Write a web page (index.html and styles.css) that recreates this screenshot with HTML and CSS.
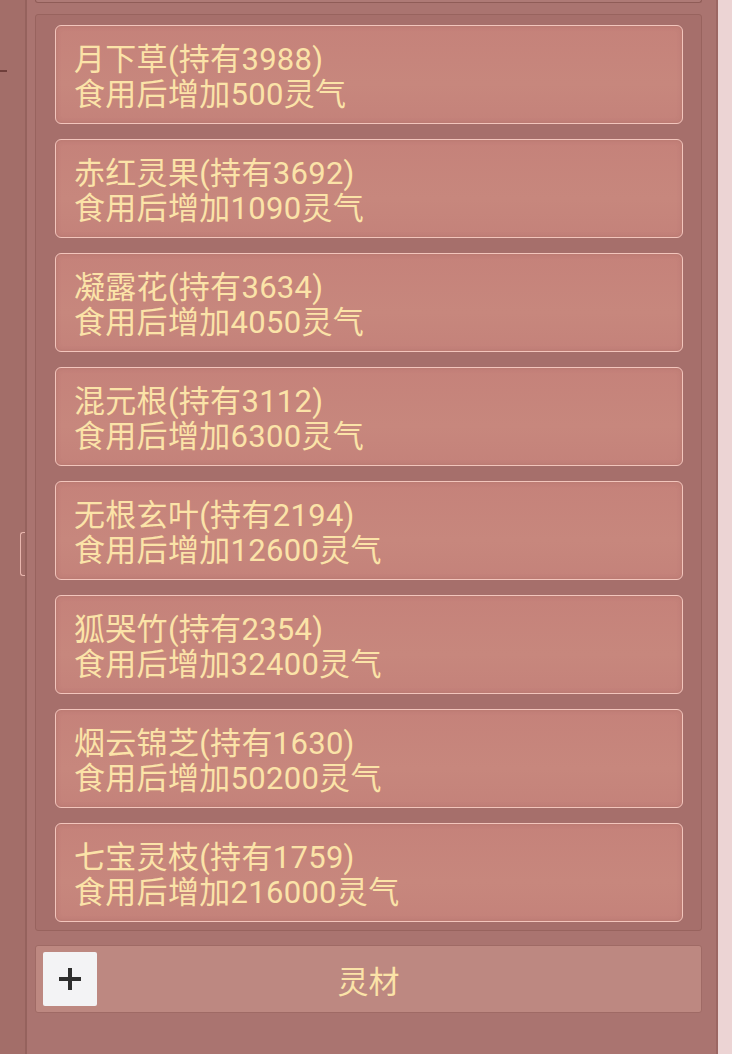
FILE: index.html
```html
<!DOCTYPE html>
<html>
	<head>
		<meta charset="utf-8">
		<title>灵材</title>
		<link rel="stylesheet" href="styles.css">
	</head>
	<body>
		<div class="side">
			<span class="dash"></span>
			<span class="bracket"></span>
		</div>
		<div class="panel">
			<div class="top-bar"></div>
			<ul class="list">
				<li class="item"><p>月下草(持有3988)</p><p>食用后增加500灵气</p></li>
				<li class="item"><p>赤红灵果(持有3692)</p><p>食用后增加1090灵气</p></li>
				<li class="item"><p>凝露花(持有3634)</p><p>食用后增加4050灵气</p></li>
				<li class="item"><p>混元根(持有3112)</p><p>食用后增加6300灵气</p></li>
				<li class="item"><p>无根玄叶(持有2194)</p><p>食用后增加12600灵气</p></li>
				<li class="item"><p>狐哭竹(持有2354)</p><p>食用后增加32400灵气</p></li>
				<li class="item"><p>烟云锦芝(持有1630)</p><p>食用后增加50200灵气</p></li>
				<li class="item"><p>七宝灵枝(持有1759)</p><p>食用后增加216000灵气</p></li>
			</ul>
			<div class="tab">
				<button class="add">
					<svg width="26" height="26" viewBox="0 0 26 26">
						<path d="M13 2 V24 M2 13 H24" stroke="#2e2e2e" stroke-width="4"/>
					</svg>
				</button>
				<span class="label">灵材</span>
			</div>
		</div>
		<div class="bg"></div>
	</body>
</html>
```

FILE: styles.css
```css
* {
	margin: 0;
	padding: 0;
	box-sizing: border-box;
}

ul {
	list-style: none;
}

body {
	display: flex;
	height: 1054px;
	overflow: hidden;
	background-color: #ead2d1;
	font-family: Roboto, "Noto Sans CJK SC", sans-serif;
}

.side {
	width: 27px;
	flex-shrink: 0;
	display: flex;
	flex-direction: column;
	align-items: flex-start;
	background-color: #a36e69;
	border-right: 2px solid #95625d;
}

.side .dash {
	width: 7px;
	height: 2px;
	margin-top: 70px;
	background-color: #6f3f3b;
}

.side .bracket {
	width: 5px;
	height: 44px;
	margin-top: 460px;
	margin-left: 20px;
	border: 1px solid #e8b6ae;
	border-right: none;
	border-radius: 3px 0 0 3px;
}

.panel {
	width: 691px;
	flex-shrink: 0;
	padding: 0 14px 0 8px;
	background-color: #aa7470;
	border-right: 2px solid #9c6763;
}

.top-bar {
	height: 3px;
	background-color: #ae7a76;
	border: 1px solid #8f5c57;
	border-top: none;
	border-radius: 0 0 3px 3px;
}

.list {
	margin-top: 11px;
	padding: 10px 18px 8px 19px;
	display: flex;
	flex-direction: column;
	gap: 15px;
	background-color: #a66f6b;
	border: 1px solid #98635e;
	border-radius: 3px;
}

.list .item {
	height: 99px;
	padding: 16px 18px 0;
	color: #fbe3a8;
	font-size: 31px;
	line-height: 35px;
	letter-spacing: 0.3px;
	white-space: nowrap;
	background: linear-gradient(180deg, #c5827a 0%, #c7877d 60%, #c4827a 100%);
	border: 1px solid #f2c5bc;
	border-radius: 6px;
	box-shadow: inset 0 0 5px rgba(150, 90, 85, 0.3);
}

.tab {
	margin-top: 14px;
	height: 68px;
	padding: 6px 7px;
	display: grid;
	grid-template-columns: 54px 1fr 54px;
	align-items: center;
	background-color: #bd8881;
	border: 1px solid #9f6a65;
	border-radius: 3px;
}

.tab .add {
	width: 54px;
	height: 54px;
	display: flex;
	align-items: center;
	justify-content: center;
	background-color: #f3f3f5;
	border: none;
	border-radius: 2px;
}

.tab .label {
	text-align: center;
	color: #fbe3a8;
	font-size: 31px;
}

.bg {
	flex: 1;
	background-color: #ecd4d4;
}
```
